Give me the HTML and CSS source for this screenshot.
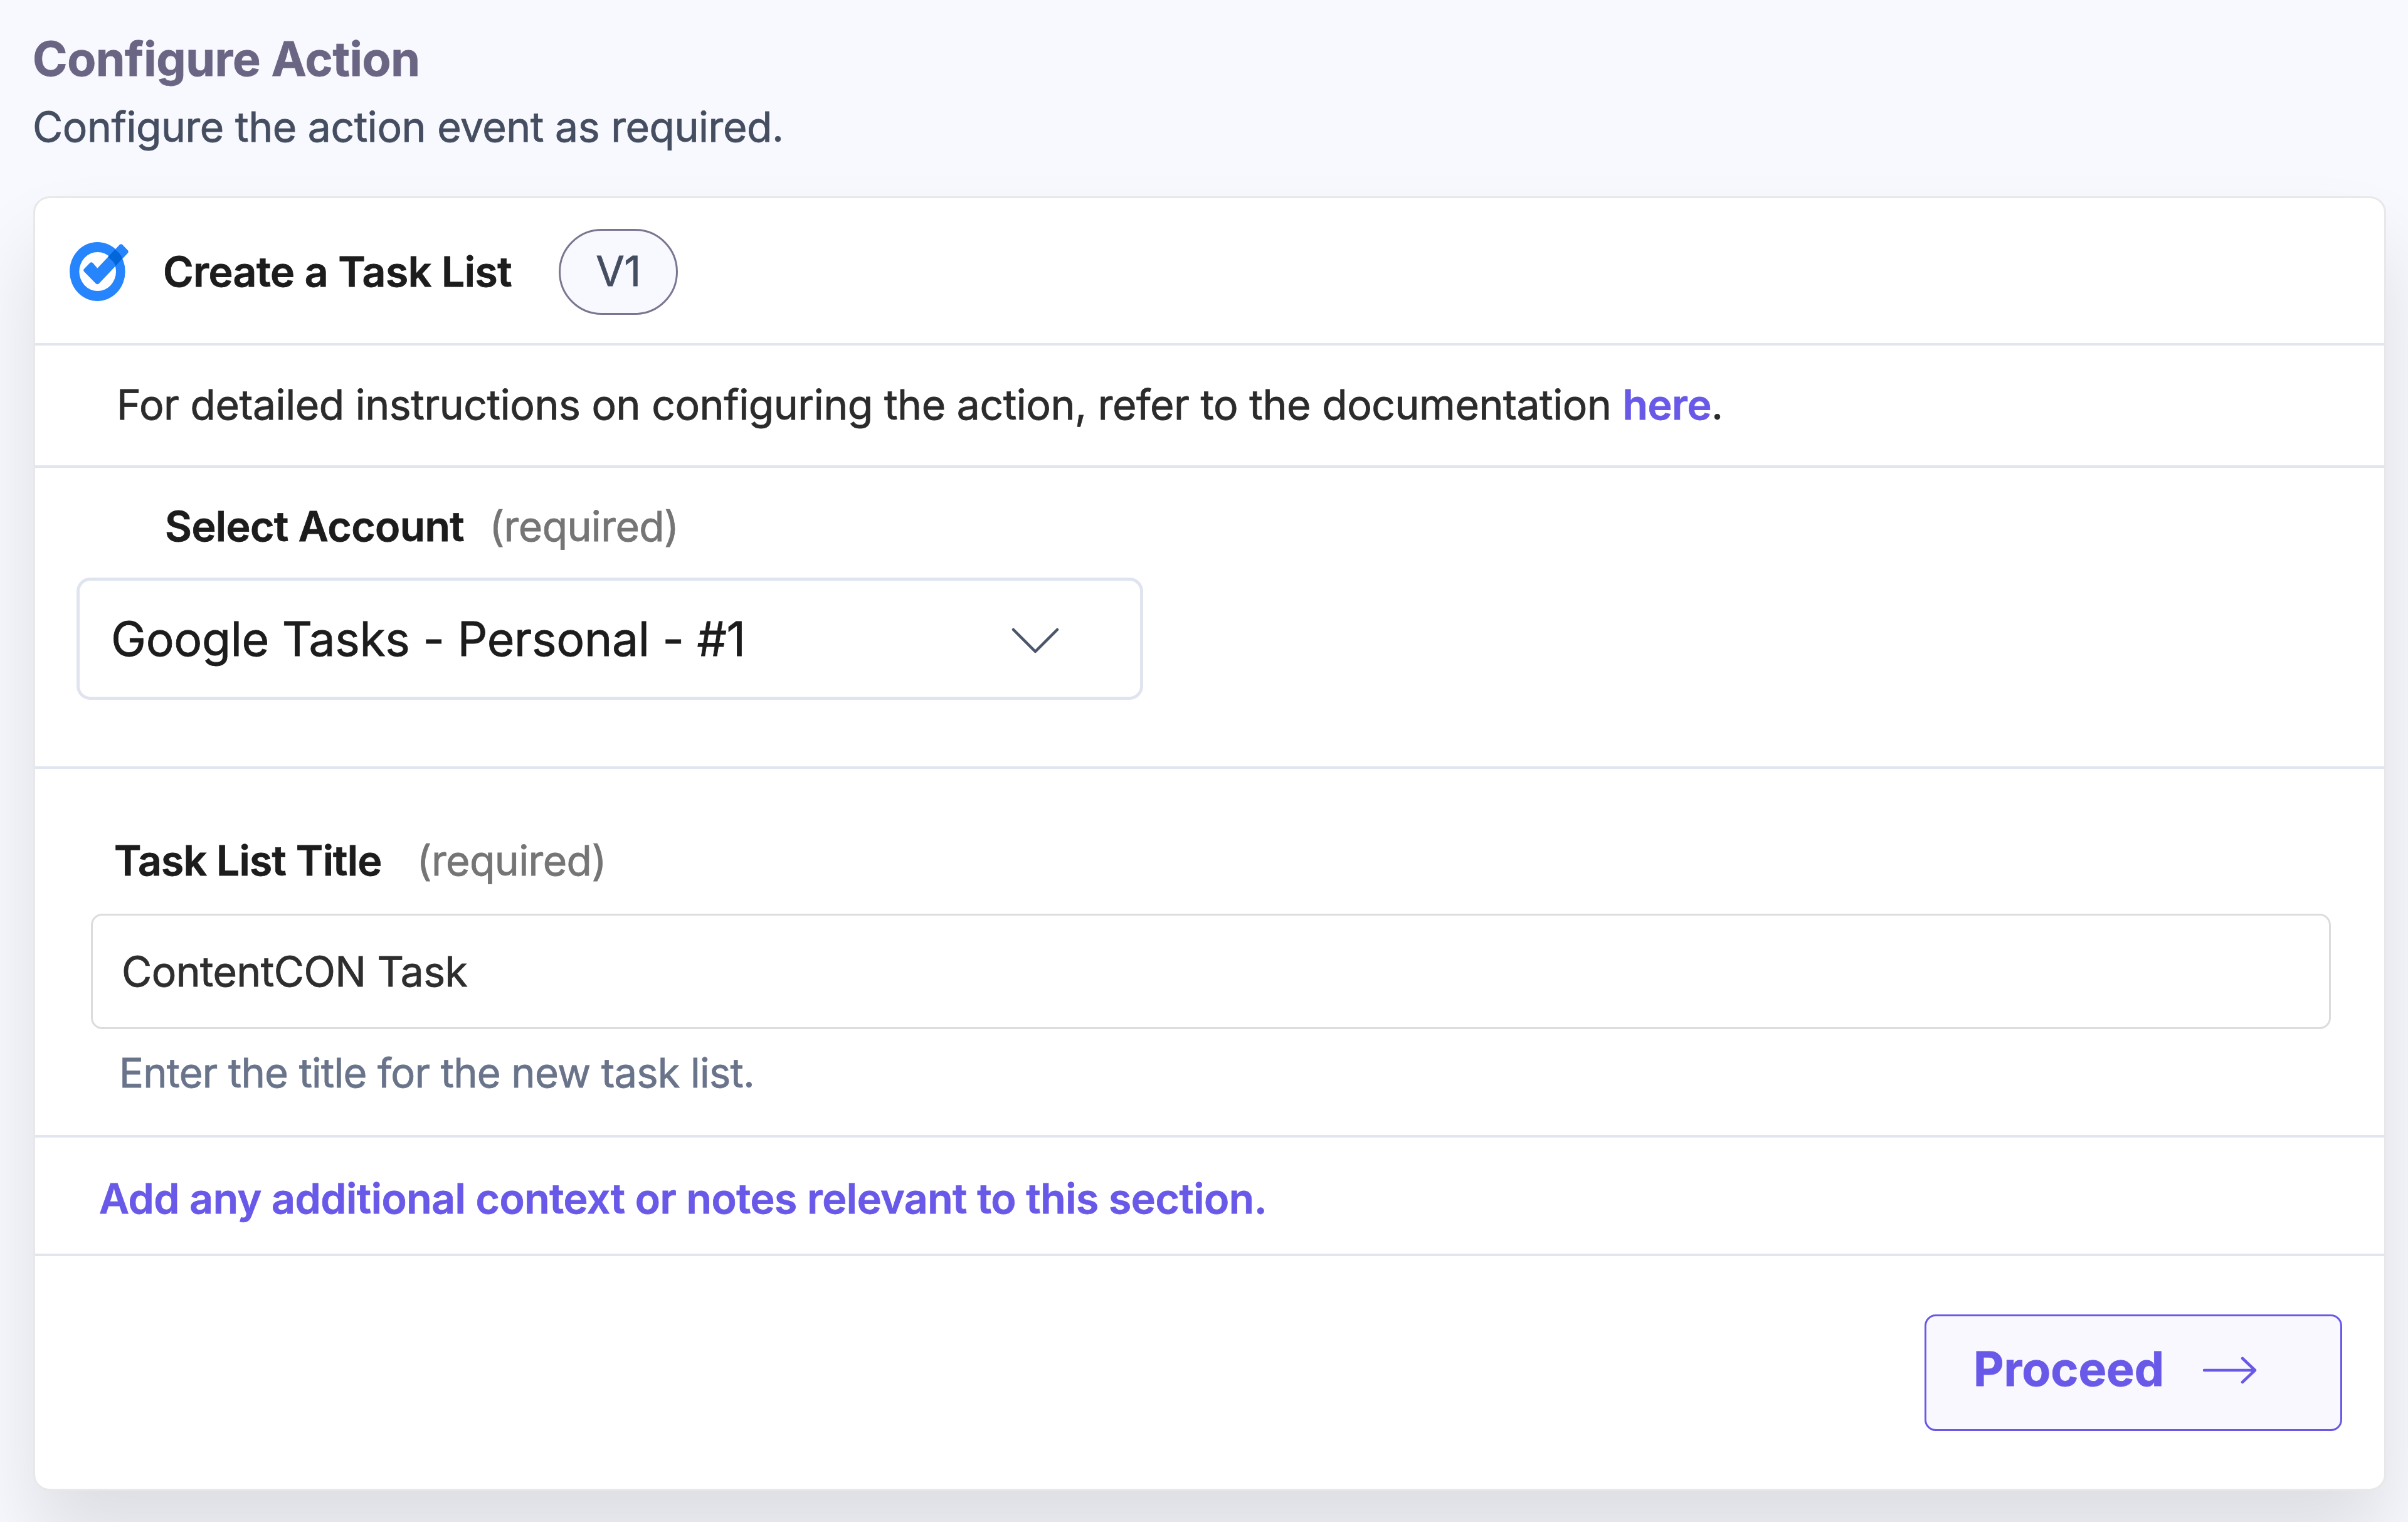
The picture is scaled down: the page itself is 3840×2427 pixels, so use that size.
FILE: index.html
```html
<!DOCTYPE html>
<html lang="en">
<head>
<meta charset="utf-8">
<title>Configure Action</title>
<link rel="stylesheet" href="styles.css">
</head>
<body>
<main class="page">
  <header class="intro">
    <h1 class="intro-title">Configure Action</h1>
    <p class="intro-text">Configure the action event as required.</p>
  </header>

  <section class="card">
    <div class="row row-head">
      <svg class="app-icon" viewBox="64 108 282 282" aria-hidden="true">
        <path fill="#2684fc" fill-rule="evenodd" d="M64 249a133 141 0 1 1 266 0a133 141 0 1 1-266 0zM110 249a88 93 0 1 0 176 0a88 93 0 1 0-176 0z"/>
        <path fill="#2684fc" d="M133 237L161 208Q168 202 175 208L197 233L303 121Q310 115 317 121L342 147Q348 154 342 161L205 306Q197 314 189 306L133 249Q128 243 133 237z"/>
        <path fill="#0066da" d="M247 180L281 144Q306 160 317 187L284 222Q275 198 247 180z"/>
      </svg>
      <h2 class="action-name">Create a Task List</h2>
      <span class="version">V1</span>
    </div>

    <div class="row row-docs">
      <p class="docs">For detailed instructions on configuring the action, refer to the documentation <a class="docs-link" href="#">here</a>.</p>
    </div>

    <div class="row row-account">
      <div class="label label-account"><span class="label-name">Select Account</span><span class="required">(required)</span></div>
      <div class="select" role="combobox" aria-expanded="false">
        <span class="select-value">Google Tasks - Personal - #1</span>
        <svg class="chevron" viewBox="0 0 76 42" aria-hidden="true"><path d="M3 3L38 38L73 3"/></svg>
      </div>
    </div>

    <div class="row row-title">
      <div class="label label-title"><span class="label-name">Task List Title</span><span class="required">(required)</span></div>
      <div class="field">ContentCON Task</div>
      <p class="help">Enter the title for the new task list.</p>
    </div>

    <div class="row row-notes">
      <a class="notes" href="#">Add any additional context or notes relevant to this section.</a>
    </div>

    <div class="row-actions">
      <button class="proceed" type="button">
        <span>Proceed</span>
        <svg class="arrow" viewBox="0 0 86 44" aria-hidden="true"><path d="M2 22H83M63 3L83 22L63 41"/></svg>
      </button>
    </div>
  </section>
</main>
</body>
</html>
```

FILE: styles.css
```css
* { box-sizing: border-box; }

body {
  margin: 0;
  height: 2427px;
  overflow: hidden;
  background: #f8f9fe;
  font-family: Inter, "Liberation Sans", sans-serif;
  font-size: 66px;
  font-weight: 400;
  line-height: 80px;
  letter-spacing: -0.45px;
  -webkit-text-stroke: 0.8px currentColor;
  color: #1c1c1c;
}

h1, h2, p { margin: 0; }
a { text-decoration: none; }

.page {
  display: flex;
  flex-direction: column;
  padding: 49px 35px 0 53px;
}

.intro {
  display: flex;
  flex-direction: column;
  gap: 23px;
  margin: 0 0 71px -1px;
}

.intro-title {
  font-size: 75px;
  line-height: 90px;
  font-weight: 700;
  letter-spacing: -0.35px;
  color: #6b6584;
}

.intro-text { color: #454e61; }

.card {
  display: flex;
  flex-direction: column;
  height: 2064px;
  border: 3px solid #e8e8e9;
  border-radius: 26px;
  background: #fff;
  box-shadow: 0 80px 130px rgba(0, 0, 0, 0.11);
}

.row { border-bottom: 4px solid #e1e5f0; }

.row-head {
  display: flex;
  align-items: center;
  height: 235px;
  padding: 3px 0 0 55px;
}

.app-icon { width: 94px; height: 94px; }

.action-name {
  margin-left: 55px;
  font-size: 66px;
  line-height: 80px;
  font-weight: 600;
  letter-spacing: -0.5px;
}

.version {
  display: flex;
  align-items: center;
  justify-content: center;
  width: 190px;
  height: 137px;
  margin-left: 75px;
  padding-bottom: 2px;
  border: 3px solid #7b7690;
  border-radius: 69px;
  background: #f8f9fe;
  color: #454e61;
}

.row-docs {
  display: flex;
  align-items: center;
  height: 195px;
  padding: 0 0 3px 130px;
  color: #2b2b2b;
}

.docs-link { font-weight: 600; color: #6959e8; }

.row-account {
  height: 480px;
  padding: 53px 0 0 66px;
}

.label {
  display: flex;
  height: 80px;
}

.label-name { font-weight: 600; letter-spacing: -0.55px; }
.required { color: #757575; letter-spacing: -0.6px; }
.label-account { padding-left: 141px; gap: 40px; }

.select {
  display: flex;
  align-items: center;
  justify-content: space-between;
  width: 1701px;
  height: 195px;
  margin-top: 42px;
  padding: 0 129px 0 50px;
  border: 5px solid #e0e4ef;
  border-radius: 22px;
  font-size: 75px;
  letter-spacing: -0.3px;
}

.chevron { width: 76px; height: 42px; margin-top: 6px; }

.chevron path {
  fill: none;
  stroke: #4c566b;
  stroke-width: 4.5;
  stroke-linecap: round;
  stroke-linejoin: round;
}

.row-title {
  height: 588px;
  padding: 106px 85px 0 89px;
}

.label-title { padding-left: 37px; gap: 56px; }
.label-title .label-name { letter-spacing: -0.8px; }

.field {
  display: flex;
  align-items: center;
  height: 184px;
  margin-top: 45px;
  padding-left: 46px;
  border: 3px solid #dcdcdc;
  border-radius: 18px;
  letter-spacing: -0.57px;
  color: #2e2e2e;
}

.help {
  margin: 30px 0 0 45px;
  font-size: 65px;
  letter-spacing: -0.8px;
  color: #69748b;
}

.row-notes {
  display: flex;
  align-items: center;
  height: 189px;
  padding: 8px 0 0 102px;
}

.notes { font-weight: 600; color: #6959e8; }

.row-actions {
  display: flex;
  justify-content: flex-end;
  padding: 93px 67px 0 0;
}

.proceed {
  display: flex;
  align-items: flex-start;
  gap: 62px;
  width: 666px;
  height: 186px;
  padding: 39px 0 0 75px;
  border: 3px solid #6959e8;
  border-radius: 18px;
  background: #f9f8ff;
  font: 700 75px/90px Inter, "Liberation Sans", sans-serif;
  letter-spacing: 0;
  color: #6959e8;
}

.arrow { width: 86px; height: 44px; margin-top: 25px; }

.arrow path {
  fill: none;
  stroke: #6959e8;
  stroke-width: 4.5;
  stroke-linecap: round;
  stroke-linejoin: round;
}
```
